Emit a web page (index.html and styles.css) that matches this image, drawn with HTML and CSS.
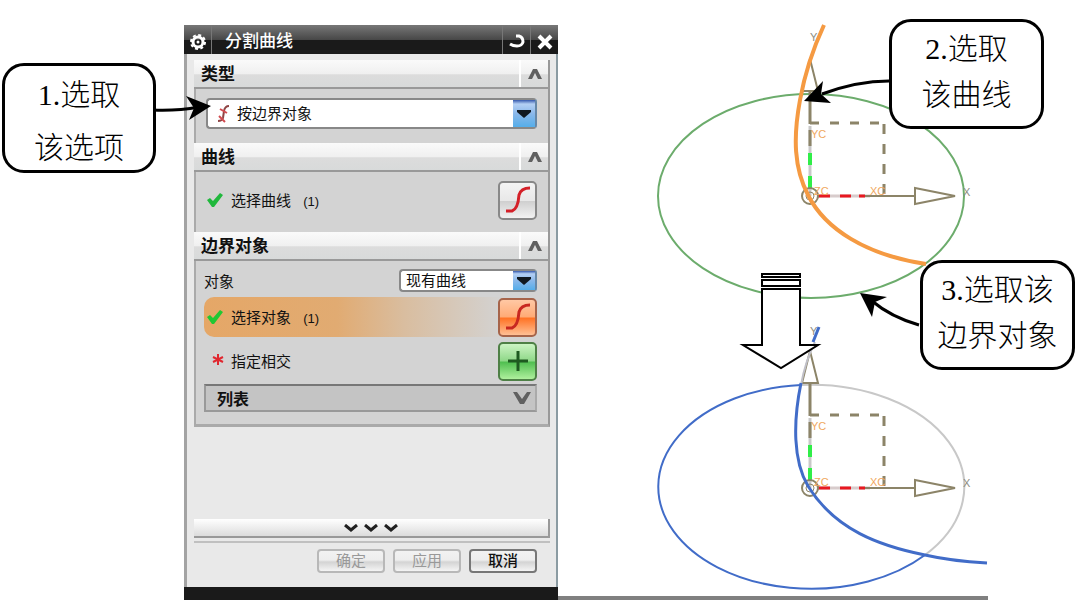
FILE: index.html
```html
<!DOCTYPE html>
<html lang="zh-CN">
<head>
<meta charset="utf-8">
<title>分割曲线</title>
<link rel="stylesheet" href="styles.css">
</head>
<body>
<main class="figure">
  <section class="notes">
    <div class="callout callout-type">
      <p>1.选取<br>该选项</p>
      <svg class="pointer" viewBox="0 0 60 40" width="60" height="40" aria-hidden="true">
        <path d="M0 24Q24 25 46 21" fill="none" stroke="#000" stroke-width="3"/>
        <path d="M58 20L33 10L41 22L36 34Z"/>
      </svg>
    </div>
  </section>

  <form class="dialog">
    <header class="titlebar">
      <span class="title-cell gear">
        <svg viewBox="0 0 20 20" width="20" height="20" aria-hidden="true">
          <circle cx="10" cy="10" r="5" fill="none" stroke="#fff" stroke-width="3"/>
          <circle cx="10" cy="10" r="7" fill="none" stroke="#fff" stroke-width="2" stroke-dasharray="3 2.5"/>
          <circle cx="10" cy="10" r="1.500" fill="#fff"/>
        </svg>
      </span>
      <h1>分割曲线</h1>
      <button type="button" class="title-cell" aria-label="重置">
        <svg viewBox="0 0 20 20" width="20" height="20" aria-hidden="true"><path d="M9 4H12Q16 5 16 10Q15 14 10 14Q6 14 3 12" fill="none" stroke="#fff" stroke-width="3"/></svg>
      </button>
      <button type="button" class="title-cell" aria-label="关闭">
        <svg viewBox="0 0 20 20" width="20" height="20" aria-hidden="true"><path d="M4 4L16 16M16 4L4 16" stroke="#fff" stroke-width="4"/></svg>
      </button>
    </header>

    <div class="content">
      <div class="groups">
        <section class="group">
          <header class="group-head">
            <h2 id="type">类型</h2>
            <button type="button" class="fold" aria-labelledby="type"><svg viewBox="0 0 14 12" width="14" height="12" aria-hidden="true"><path d="M0 11H4L7 5L10 11H14L9 1H5Z" fill="#606060"/></svg></button>
          </header>
          <div class="group-body type-body">
            <div class="combo combo-wide">
              <svg class="combo-icon" viewBox="0 0 16 20" width="16" height="20" aria-hidden="true"><path d="M13 2Q9 2 8 7L7 14Q6 17 2 17" fill="none" stroke="#8f4545" stroke-width="2"/><path d="M4 5L11 9M3 12L9 18" stroke="#d24b50" stroke-width="2"/></svg>
              <select aria-labelledby="type"><option>按边界对象</option></select>
              <span class="arrow"><svg viewBox="0 0 14 8" width="14" height="8" aria-hidden="true"><path d="M0 0H14V2L7 8L0 2Z" fill="#101820"/></svg></span>
            </div>
          </div>
        </section>

        <section class="group">
          <header class="group-head">
            <h2 id="curve">曲线</h2>
            <button type="button" class="fold" aria-labelledby="curve"><svg viewBox="0 0 14 12" width="14" height="12" aria-hidden="true"><path d="M0 11H4L7 5L10 11H14L9 1H5Z" fill="#606060"/></svg></button>
          </header>
          <div class="group-body curve-body">
            <div class="row">
              <svg class="mark" viewBox="0 0 18 16" width="18" height="16" aria-hidden="true"><path d="M1 8L4 6L7 9L14 1L17 3L8 15H6Z" fill="#20b83c"/></svg>
              <span class="label" id="pick-curve">选择曲线 <small>(1)</small></span>
              <button type="button" class="tool" aria-labelledby="pick-curve"><svg viewBox="0 0 32 32" width="32" height="32" aria-hidden="true"><path d="M28 4Q19 4 17 11Q16 25 10 27H4" fill="none" stroke="#d42028" stroke-width="3"/></svg></button>
            </div>
          </div>
        </section>

        <section class="group">
          <header class="group-head">
            <h2 id="bound">边界对象</h2>
            <button type="button" class="fold" aria-labelledby="bound"><svg viewBox="0 0 14 12" width="14" height="12" aria-hidden="true"><path d="M0 11H4L7 5L10 11H14L9 1H5Z" fill="#606060"/></svg></button>
          </header>
          <div class="group-body bound-body">
            <div class="object-row">
              <label for="object">对象</label>
              <div class="combo combo-small">
                <select id="object"><option>现有曲线</option></select>
                <span class="arrow"><svg viewBox="0 0 14 8" width="14" height="8" aria-hidden="true"><path d="M0 0H14V2L7 8L0 2Z" fill="#101820"/></svg></span>
              </div>
            </div>
            <div class="row active">
              <svg class="mark" viewBox="0 0 18 16" width="18" height="16" aria-hidden="true"><path d="M1 8L4 6L7 9L14 1L17 3L8 15H6Z" fill="#20c832"/></svg>
              <span class="label" id="pick-object">选择对象 <small>(1)</small></span>
              <button type="button" class="tool tool-orange" aria-labelledby="pick-object"><svg viewBox="0 0 32 32" width="32" height="32" aria-hidden="true"><path d="M28 4Q19 4 17 11Q16 25 10 27H4" fill="none" stroke="#c82820" stroke-width="3"/></svg></button>
            </div>
            <div class="row">
              <svg class="mark" viewBox="0 0 18 16" width="18" height="16" aria-hidden="true"><path d="M12 1V12M7 4L17 9M17 4L7 9" stroke="#e02830" stroke-width="2"/></svg>
              <span class="label" id="pick-cross">指定相交</span>
              <button type="button" class="tool tool-green" aria-labelledby="pick-cross"><svg viewBox="0 0 32 32" width="32" height="32" aria-hidden="true"><path d="M16 6V26M6 16H26" stroke="#1e5a20" stroke-width="3"/></svg></button>
            </div>
            <button type="button" class="list">列表
              <svg viewBox="0 0 18 12" width="18" height="12" aria-hidden="true"><path d="M0 0H4L9 7L14 0H18L11 12H7Z" fill="#606060"/></svg>
            </button>
          </div>
        </section>
      </div>

      <button type="button" class="more" aria-label="更多">
        <svg viewBox="0 0 54 8" width="54" height="8" aria-hidden="true"><path d="M1 1L7 6L13 1M21 1L27 6L33 1M41 1L47 6L53 1" fill="none" stroke="#202020" stroke-width="3"/></svg>
      </button>
      <footer class="actions">
        <button type="button" disabled>确定</button>
        <button type="button" disabled>应用</button>
        <button type="button">取消</button>
      </footer>
    </div>
  </form>

  <section class="scene">
    <svg class="drawing" viewBox="558 0 517 600" role="img" aria-labelledby="curve">
      <defs>
        <g id="axes" fill="none" stroke="#8c8468">
          <path d="M0-73H74" stroke-width="3" stroke-dasharray="9 11"/>
          <path d="M74-72V0" stroke-width="3" stroke-dasharray="10 10"/>
          <path d="M0-70V0" stroke="#c8c8c8" stroke-width="3"/>
          <path d="M0-104V-72M0-66V-50" stroke-width="3"/>
          <path d="M0-43V-31M0-20V-7" stroke="#30ee48" stroke-width="4"/>
          <path d="M8 0H60" stroke="#d8cccc" stroke-width="3"/>
          <path d="M54 0H104" stroke-width="2"/>
          <path d="M8 0H20M30 0H41M49 0H55" stroke="#e81820" stroke-width="3"/>
          <path d="M105-8V8L145 0Z" stroke-width="2"/>
          <path d="M0-137L-8-105H8Z" stroke-width="2"/>
          <circle r="8" stroke-width="2"/>
          <circle r="4" stroke-width="1"/>
        </g>
      </defs>
      <ellipse cx="811" cy="196" rx="153" ry="102" fill="none" stroke="#6cac6c" stroke-width="2"/>
      <use href="#axes" x="810" y="196"/>
      <path d="M824 25C811 53 804 78 800 100C793 138 794 168 808 195C825 229 866 255 926 264" fill="none" stroke="#f59a42" stroke-width="4"/>
      <g class="axis-name"><text x="811" y="138">YC</text><text x="814" y="195">ZC</text><text x="870" y="195">XC</text></g>
      <g class="axis-end"><text x="810" y="41">Y</text><text x="963" y="196">X</text></g>

      <path d="M801 385A153 102 0 0 1 925 555" fill="none" stroke="#c8c8c8" stroke-width="2"/>
      <path d="M925 555A153 102 0 1 1 801 385" fill="none" stroke="#416cc8" stroke-width="2"/>
      <use href="#axes" x="810" y="488"/>
      <path d="M815 342Q805 362 801 385" fill="none" stroke="#c0c0c8" stroke-width="2"/>
      <path d="M819 327L813 342M801 383C793 422 793 461 808 486C835 530 880 546 925 555Q951 561 987 563" fill="none" stroke="#416cc8" stroke-width="3"/>
      <g class="axis-name"><text x="811" y="430">YC</text><text x="814" y="486">ZC</text><text x="870" y="486">XC</text></g>
      <g class="axis-end"><text x="810" y="335">Y</text><text x="963" y="487">X</text></g>

      <g fill="#fff" stroke="#000" stroke-width="2">
        <path d="M762 274H800V277H762ZM762 280H800V286H762Z"/>
        <path d="M762 289H800V345H818L781 368L743 345H762Z"/>
      </g>
      <path d="M889 81Q857 81 822 94M919 325Q891 317 872 301" fill="none" stroke="#000" stroke-width="3"/>
      <path d="M804 101L823 81L821 94L831 103ZM860 293L887 297L875 302L872 317Z"/>
      <path d="M558 598H988" stroke="#808080" stroke-width="4"/>
    </svg>
    <div class="callout callout-curve"><p>2.选取<br>该曲线</p></div>
    <div class="callout callout-bound"><p>3.选取该<br>边界对象</p></div>
  </section>
</main>
</body>
</html>
```
FILE: styles.css
```css
* { box-sizing: border-box; }

body {
  margin: 0;
  background: #fff;
  color: #111;
  font-family: "Liberation Sans", "Noto Sans CJK SC", sans-serif;
  font-size: 15px;
}

h1, h2, p { margin: 0; }

button, select { font: inherit; color: inherit; }

.figure {
  display: grid;
  grid-template-columns: 184fr 374fr 517fr;
  min-height: 100vh;
}

/* Callouts */
.notes { padding: 63px 28px 0 2px; }

.callout {
  position: relative;
  display: grid;
  place-items: center;
  height: 110px;
  border: 3px solid #000;
  border-radius: 22px;
  background: #fff;
  color: #000;
  font-family: "Liberation Serif", "Noto Sans CJK SC", serif;
  font-size: 30px;
  font-weight: 300;
  line-height: 46px;
  text-align: center;
  white-space: nowrap;
}

.callout-type { line-height: 53px; padding-top: 2px; }

.pointer {
  position: absolute;
  z-index: 1;
  left: 100%;
  top: 20px;
}

.scene { position: relative; }
.drawing { display: block; width: 100%; }

.scene .callout {
  position: absolute;
  width: 30%;
  padding-bottom: 4px;
}

.callout-curve { left: 64%; top: 19px; }
.callout-bound { right: 0; top: 260px; }

.axis-name { fill: #f0a860; font-size: 11px; }
.axis-end { fill: #8c8c80; font-size: 11px; }

/* Dialog */
.dialog {
  display: flex;
  flex-direction: column;
  margin-top: 25px;
  border-bottom: 13px solid #1a1a1a;
}

.titlebar {
  display: flex;
  align-items: stretch;
  height: 29px;
  background: linear-gradient(#777, #484848 50%, #1a1a1a 52%, #1a1a1a);
  color: #fff;
}

.titlebar h1 {
  flex: 1;
  padding-left: 13px;
  font-size: 17px;
  font-weight: 500;
  line-height: 33px;
}

.title-cell {
  display: grid;
  place-items: center;
  width: 28px;
  padding: 4px 0 0;
  border: 0;
  border-left: 1px solid #777;
  background: none;
}

.gear { border-left: 0; border-right: 1px solid #777; }

.content {
  flex: 1;
  display: flex;
  flex-direction: column;
  padding: 6px 6px 14px 7px;
  border-left: 3px solid #a3a3a3;
  border-right: 2px solid #8b9ba2;
  background: #e9e9e9;
}

.groups { border-right: 2px solid #999; border-bottom: 3px solid #aaa; }

.group-head {
  display: flex;
  align-items: stretch;
  height: 29px;
  background: linear-gradient(#fafafa, #f0f0f0 50%, #dcdcdc 55%, #d8dada);
  border-bottom: 2px solid #999;
}

.group-head h2 {
  flex: 1;
  padding-left: 7px;
  font-size: 17px;
  font-weight: 700;
  line-height: 30px;
}

.fold {
  display: grid;
  place-items: center;
  width: 29px;
  padding: 0;
  border: 0;
  border-left: 2px solid #fff;
  background: none;
}

.group-body {
  padding: 0 11px 0 10px;
  border-left: 2px solid #aaa;
  background: #d3d3d3;
}

.type-body { padding-top: 9px; padding-bottom: 14px; }
.curve-body { padding-top: 8px; padding-bottom: 12px; }
.bound-body { padding: 8px 11px 12px 8px; }

.combo {
  display: flex;
  align-items: stretch;
  border: 2px solid #888;
  border-right-color: #6688a8;
  border-radius: 4px;
  background: #fff;
}

.combo select {
  flex: 1;
  min-width: 0;
  padding: 0 5px;
  border: 0;
  background: none;
  appearance: none;
}

.combo-wide { height: 31px; }
.combo-small { width: 138px; height: 23px; }
.combo-icon { align-self: center; margin-left: 8px; }

.arrow {
  display: grid;
  place-items: center;
  width: 22px;
  background: linear-gradient(#3558ac, #b4d0f4 15%, #8bb8ea 50%, #55aeea);
}

.object-row {
  display: flex;
  align-items: center;
  justify-content: space-between;
  margin-bottom: 5px;
}

.row {
  display: flex;
  align-items: center;
  gap: 7px;
  height: 40px;
}

.curve-body .row { margin-left: -2px; }

.bound-body .row + .row { margin-top: 4px; }

.active {
  border-radius: 10px 0 0 10px;
  background: linear-gradient(90deg, #e5a767, #e1ab72 40%, #d9bd9f 60%, #d3d3d3 90%);
}

.mark { margin-left: 2px; }
.label { flex: 1; padding-bottom: 2px; }
.label small { padding-left: 8px; font-size: 13px; }

.tool {
  display: grid;
  place-items: center;
  width: 39px;
  height: 39px;
  padding: 0;
  border: 2px solid #888;
  border-radius: 5px;
  background: linear-gradient(#f4f4f4, #e8e8e8 50%, #cfcfcf 52%, #f2f2f2);
}

.tool-orange {
  border-color: #a6644a;
  background: linear-gradient(#ffc8a4, #ffab76 48%, #ff7325 52%, #ffc095);
}

.tool-green {
  border-color: #4e8046;
  background: linear-gradient(#ccf4c4, #8fd888 48%, #50bf50 52%, #aff09d);
}

.list {
  display: flex;
  align-items: center;
  justify-content: space-between;
  width: 100%;
  height: 28px;
  margin-top: 3px;
  padding: 0 4px 0 11px;
  border: 2px solid #999;
  border-top-color: #777;
  border-right-color: #aaa;
  background: #c4c4c4;
  font-size: 16px;
  font-weight: 700;
}

.more {
  display: flex;
  justify-content: center;
  align-items: flex-start;
  height: 19px;
  margin-top: auto;
  padding: 5px 0 0;
  border: 0;
  border-right: 2px solid #999;
  border-bottom: 2px solid #999;
  background: linear-gradient(#fff, #dcdcdc);
}

.actions {
  display: flex;
  justify-content: flex-end;
  gap: 8px;
  margin-top: 3px;
  padding: 6px 13px 0 0;
  border-top: 2px solid #c0c0c0;
}

.actions button {
  width: 68px;
  height: 24px;
  padding: 0;
  border: 2px solid #777;
  border-radius: 4px;
  background: linear-gradient(#f2f2f2, #eee 45%, #d4d4d4 55%, #f4f4f4);
  font-weight: 500;
  line-height: 20px;
}

.actions button:disabled { border-color: #b8b8b8; color: #999; font-weight: 400; }
```
